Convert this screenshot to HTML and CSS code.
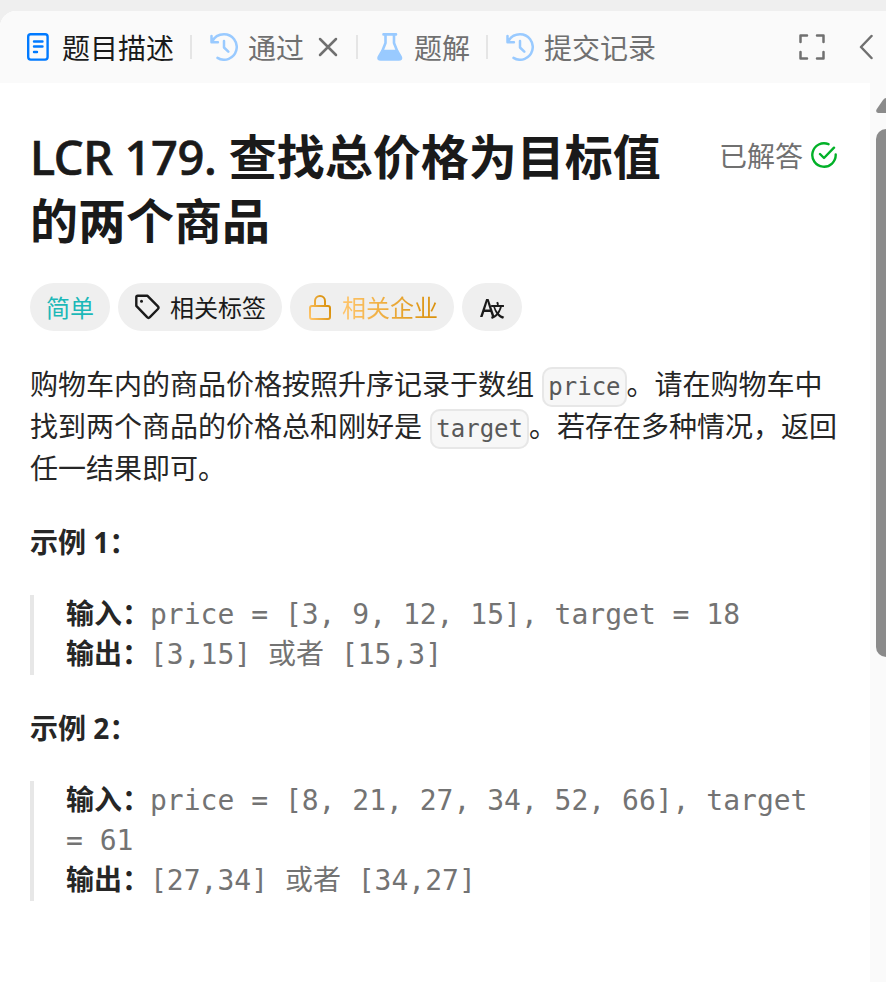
FILE: index.html
```html
<!DOCTYPE html>
<html lang="zh-CN">
<head>
    <meta charset="UTF-8">
    <meta name="viewport" content="width=device-width, initial-scale=1.0">
    <link rel="stylesheet" href="styles.css">
    <title>LCR 179. 查找总价格为目标值的两个商品</title>
</head>
<body>
    <div class="panel">
        <div class="tabs">
            <div class="tab active">
                <svg class="icon-doc" width="22" height="28" viewBox="0 0 22 28" fill="none" stroke="#007aff" stroke-width="2.4" stroke-linecap="round" stroke-linejoin="round">
                    <rect x="1.2" y="1.2" width="19.4" height="25.4" rx="2.5"/>
                    <path d="M7 8.5h8.5M7 13.5h8.5M7 19h3"/>
                </svg>
                <span>题目描述</span>
            </div>
            <span class="divider"></span>
            <div class="tab tab-pass">
                <svg width="28" height="28" viewBox="0 0 28 28" fill="none" stroke="#99caff" stroke-width="2.5" stroke-linecap="round" stroke-linejoin="round">
                    <path d="M1.5 3v6.2h6.4M1.8 9C4.2 4.2 9 1.3 14 1.3a12.7 12.7 0 1 1-6.5 23.6M14 8v6.5l4.3 4.2"/>
                </svg>
                <span>通过</span>
                <svg class="icon-close" width="20" height="20" viewBox="0 0 20 20" fill="none" stroke="#707070" stroke-width="2.5" stroke-linecap="round">
                    <path d="M2 2l16 16M18 2L2 18"/>
                </svg>
            </div>
            <span class="divider"></span>
            <div class="tab tab-solution">
                <svg width="26" height="28" viewBox="0 0 26 28" fill="none" stroke="#99caff" stroke-width="2.6" stroke-linecap="round" stroke-linejoin="round">
                    <path d="M6.5 1.4h12.5M8.5 1.5V10L5.5 17.5M17 1.5V10l3 7.5"/>
                    <path d="M5.3 18h14.9l3.5 6q1 2.5-1.9 2.5H3.7Q.8 26.5 1.8 24z" fill="#99caff"/>
                </svg>
                <span>题解</span>
            </div>
            <span class="divider"></span>
            <div class="tab tab-record">
                <svg width="28" height="28" viewBox="0 0 28 28" fill="none" stroke="#99caff" stroke-width="2.5" stroke-linecap="round" stroke-linejoin="round">
                    <path d="M1.5 3v6.2h6.4M1.8 9C4.2 4.2 9 1.3 14 1.3a12.7 12.7 0 1 1-6.5 23.6M14 8v6.5l4.3 4.2"/>
                </svg>
                <span>提交记录</span>
            </div>
            <div class="tools">
                <svg width="26" height="26" viewBox="0 0 26 26" fill="none" stroke="#707070" stroke-width="2.5" stroke-linecap="round" stroke-linejoin="round">
                    <path d="M1.5 8V1.5H8M18 1.5h6.5V8M24.5 18v6.5H18M8 24.5H1.5V18"/>
                </svg>
                <svg width="14" height="26" viewBox="0 0 14 26" fill="none" stroke="#707070" stroke-width="2.5" stroke-linecap="round" stroke-linejoin="round">
                    <path d="M12.5 2L2 13l10.5 11"/>
                </svg>
            </div>
        </div>
        <div class="main">
            <div class="content">
                <div class="header">
                    <h1 class="title"><span class="number">LCR 179.</span> 查找总价格为目标值的两个商品</h1>
                    <div class="solved">
                        <span>已解答</span>
                        <svg width="26" height="26" viewBox="0 0 26 26" fill="none" stroke="#02b128" stroke-width="2.4" stroke-linecap="round" stroke-linejoin="round">
                            <path d="M17.5 2.200A11.7 11.7 0 1 0 24.7 12.5M9 12l4 4L23 5.7"/>
                        </svg>
                    </div>
                </div>
                <div class="tags">
                    <div class="tag easy">简单</div>
                    <div class="tag">
                        <svg class="icon-tag" width="26" height="26" viewBox="0 0 26 26" fill="none" stroke="#1a1a1a" stroke-width="2.4" stroke-linecap="round" stroke-linejoin="round">
                            <path d="M2.3 3.200v8.600l10.800 11.400q1.400 1.400 2.800 0l8-8.200q1.200-1.300 0-2.600L13.5 1.800H3.700Q2.300 1.800 2.300 3.200z"/>
                            <circle cx="7.5" cy="7.3" r="1.5" fill="#1a1a1a" stroke="none"/>
                        </svg>
                        <span>相关标签</span>
                    </div>
                    <div class="tag company">
                        <svg class="icon-lock" width="22" height="26" viewBox="0 0 22 26" fill="none" stroke="url(#gold)" stroke-width="2" stroke-linejoin="round">
                            <defs>
                                <linearGradient id="gold" x1="0" y1="1" x2="1" y2="0.5">
                                    <stop offset="0" stop-color="#ffc56b"/>
                                    <stop offset="1" stop-color="#d9900b"/>
                                </linearGradient>
                            </defs>
                            <path d="M3 11h16a2 2 0 0 1 2 2v9a2 2 0 0 1-2 2H3a2 2 0 0 1-2-2v-9a2 2 0 0 1 2-2zM6 11V6a5 5 0 0 1 10 0v5"/>
                        </svg>
                        <span class="gold">相关企业</span>
                    </div>
                    <div class="tag translate"><span class="latin">A</span><span class="han">文</span></div>
                </div>
                <div class="description">
                    <p>购物车内的商品价格按照升序记录于数组 <code>price</code>。请在购物车中找到两个商品的价格总和刚好是 <code>target</code>。若存在多种情况，返回任一结果即可。</p>
                    <p class="example"><strong>示例 1：</strong></p>
<pre><strong>输入：</strong>price = [3, 9, 12, 15], target = 18
<strong>输出：</strong>[3,15] 或者 [15,3]</pre>
                    <p class="example"><strong>示例 2：</strong></p>
<pre><strong>输入：</strong>price = [8, 21, 27, 34, 52, 66], target = 61
<strong>输出：</strong>[27,34] 或者 [34,27]</pre>
                </div>
            </div>
            <div class="scrollbar">
                <svg width="20" height="16" viewBox="0 0 20 16">
                    <path d="M2 15Q-1 14 .8 11L7 2Q10-2 13 2l6 9q2 3-1 4z" fill="#8b8b8b"/>
                </svg>
                <div class="thumb"></div>
            </div>
        </div>
    </div>
</body>
</html>
```

FILE: styles.css
```css
*{
    box-sizing: border-box;
}
body{
    margin: 0;
    padding-top: 11px;
    height: 982px;
    overflow: hidden;
    background: #efefef;
    color: #262626;
    font-family: "Noto Sans", "Noto Sans CJK SC", sans-serif;
    font-size: 28px;
}
svg{
    display: block;
    flex-shrink: 0;
}
.panel{
    height: 971px;
    background: #fff;
    border-top-left-radius: 16px;
    overflow: hidden;
}

/* Pestañas */
.tabs{
    display: flex;
    align-items: center;
    height: 72px;
    padding-left: 27px;
    background: #fafafa;
    color: #707070;
    font-family: "Noto Sans CJK SC", sans-serif;
    line-height: 40px;
    white-space: nowrap;
}
.tab{
    display: flex;
    align-items: center;
    gap: 10px;
}
.tab.active{
    gap: 13px;
    width: 163px;
    color: #1a1a1a;
}
.tab-pass{
    width: 164px;
    padding-left: 18px;
}
.icon-close{
    margin-left: 4px;
}
.tab-solution{
    width: 128px;
    padding-left: 19px;
    gap: 11px;
}
.tab-record{
    padding-left: 18px;
}
.divider{
    width: 2px;
    height: 24px;
    background: #e5e5e5;
}
.tools{
    display: flex;
    align-items: center;
    gap: 34px;
    margin-left: auto;
    padding-right: 13px;
}

.main{
    display: flex;
    height: 899px;
}
.content{
    width: 870px;
    padding: 42px 30px 0;
}
.header{
    display: flex;
    justify-content: space-between;
}
.title{
    width: 640px;
    margin: 0;
    color: #1a1a1a;
    font-size: 48px;
    line-height: 64px;
    font-weight: 700;
}
.number{
    font-weight: 500;
    font-size: 47px;
    line-height: 1;
    letter-spacing: -0.38px;
    -webkit-text-stroke: 0.7px #1a1a1a;
}
.solved{
    display: flex;
    align-items: center;
    gap: 8px;
    height: 60px;
    padding-right: 3px;
    color: #707070;
    font-family: "Noto Sans CJK SC", sans-serif;
    line-height: 40px;
    white-space: nowrap;
}

/* Etiquetas */
.tags{
    display: flex;
    gap: 8px;
    margin-top: 30px;
}
.tag{
    display: flex;
    align-items: center;
    gap: 10px;
    height: 48px;
    padding: 0 16px;
    border-radius: 24px;
    background: #efefef;
    color: #1a1a1a;
    font-family: "Noto Sans CJK SC", sans-serif;
    font-size: 24px;
    line-height: 48px;
}
.easy{
    color: #1cb8b8;
}
.company{
    padding-left: 19px;
    gap: 11px;
}
.icon-lock{
    margin-top: 2px;
}
.gold{
    background: linear-gradient(90deg, #ffc56b, #d9900b);
    -webkit-background-clip: text;
    background-clip: text;
    color: transparent;
}
.translate{
    width: 60px;
    gap: 0;
    padding: 0 0 0 18px;
}
.latin{
    font-family: "Noto Sans", sans-serif;
    font-size: 25px;
    font-weight: 500;
    line-height: 46px;
    transform: scaleX(0.9);
    transform-origin: left;
}
.han{
    margin-left: -6px;
    padding-top: 4px;
    font-size: 14px;
    font-weight: 700;
    transform: scaleY(1.2);
}

.description{
    margin-top: 32px;
    line-height: 42px;
}
.description p{
    margin: 0;
}
.description .example{
    margin-top: 32px;
}
code{
    margin-left: 1px;
    padding: 4px;
    border: 2px solid #e7e7e7;
    border-radius: 10px;
    background: #f7f7f7;
    color: #595959;
    font-family: "DejaVu Sans Mono", monospace;
    font-size: 24px;
    line-height: 1;
}
.description strong{
    line-height: 1;
}
pre{
    margin: 32px 0;
    padding-left: 32px;
    border-left: 4px solid #e7e7e7;
    color: #737373;
    font-family: "DejaVu Sans Mono", "Noto Sans CJK SC", monospace;
    font-size: 28px;
    line-height: 40px;
    white-space: pre-wrap;
}
pre strong{
    color: #262626;
    font-family: "Noto Sans CJK SC", sans-serif;
}

/* Barra de desplazamiento */
.scrollbar{
    width: 16px;
    padding: 15px 0 0 6px;
    background: #fafafa;
    overflow: hidden;
}
.thumb{
    width: 20px;
    height: 528px;
    margin-top: 15px;
    border-radius: 10px;
    background: #8b8b8b;
}
```
